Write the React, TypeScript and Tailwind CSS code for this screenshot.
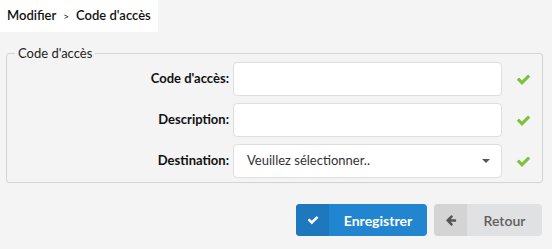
import React from 'react';

function CheckIcon({ className }: { className?: string }) {
  return (
    <svg viewBox="0 0 1792 1792" className={className} fill="currentColor">
      <path d="M1671 566q0 40-28 68l-724 724-136 136q-28 28-68 28t-68-28l-136-136-362-362q-28-28-28-68t28-68l136-136q28-28 68-28t68 28l294 295 656-657q28-28 68-28t68 28l136 136q28 28 28 68z" />
    </svg>
  );
}

function ArrowLeftIcon({ className }: { className?: string }) {
  return (
    <svg viewBox="0 0 1792 1792" className={className} fill="currentColor">
      <path d="M1664 896v128q0 53-32.5 90.5t-84.5 37.5h-704l293 294q38 36 38 90t-38 90l-75 76q-37 37-90 37-52 0-91-37l-651-652q-37-37-37-90 0-52 37-91l651-650q38-38 91-38 52 0 90 38l75 74q38 38 38 91t-38 91l-293 293h704q52 0 84.5 37.5t32.5 90.5z" />
    </svg>
  );
}

const fields = [
  { label: "Code d'accès:", type: 'input' },
  { label: 'Description:', type: 'input' },
  { label: 'Destination:', type: 'select' },
];

export default function App() {
  return (
    <div className="min-h-screen bg-[#f4f4f4] font-['Lato','Liberation_Sans',sans-serif] text-[13px] text-[#222]">
      {/* fil d'Ariane */}
      <div className="inline-flex h-8 items-center gap-[7px] bg-white pl-[7px] pr-[7px] text-[13px] font-semibold text-[#111]">
        <span>Modifier</span>
        <span className="text-[10px] font-normal">&gt;</span>
        <span>Code d'accès</span>
      </div>

      {/* formulaire */}
      <fieldset className="mt-[13px] ml-[6px] mr-[9px] rounded-[3px] border border-[#d4d4d4] pb-[4px]">
        <legend className="ml-[8px] px-[3px] text-[13px] leading-4 text-[#222]">Code d'accès</legend>
        <div className="flex flex-col gap-[7px] pt-[1px]">
          {fields.map((f) => (
            <div key={f.label} className="flex items-center">
              <label className="flex-1 pr-[4px] text-right font-bold text-[#111]">{f.label}</label>
              {f.type === 'input' ? (
                <input
                  type="text"
                  className="h-[34px] w-[269px] rounded-[4px] border border-[#dedede] bg-white px-3 outline-none"
                />
              ) : (
                <div className="flex h-[34px] w-[269px] items-center justify-between rounded-[4px] border border-[#dedede] bg-white pl-[13px] pr-[11px] text-[#333]">
                  <span>Veuillez sélectionner..</span>
                  <span className="h-0 w-0 border-x-[4px] border-t-[4px] border-x-transparent border-t-[#555]" />
                </div>
              )}
              <div className="flex w-[40px] justify-center">
                <CheckIcon className="ml-[2px] h-[15px] w-[15px] text-[#7cc23a]" />
              </div>
            </div>
          ))}
        </div>
      </fieldset>

      {/* boutons */}
      <div className="mt-[21px] mr-[10px] flex justify-end gap-[7px]">
        <button className="flex h-[32px] w-[131px] overflow-hidden rounded-[4px] bg-[#2185d0] font-bold text-white">
          <span className="flex h-full w-[33px] items-center justify-center bg-[#1e78bd]">
            <CheckIcon className="h-[12px] w-[12px]" />
          </span>
          <span className="flex flex-1 items-center justify-center text-[14px]">Enregistrer</span>
        </button>
        <button className="flex h-[32px] w-[108px] overflow-hidden rounded-[4px] bg-[#e0e1e2] font-semibold text-[#5f5f5f]">
          <span className="flex h-full w-[33px] items-center justify-center bg-[#d4d4d5]">
            <ArrowLeftIcon className="h-[12px] w-[12px] text-[#555]" />
          </span>
          <span className="flex flex-1 items-center justify-center text-[14px]">Retour</span>
        </button>
      </div>
    </div>
  );
}
